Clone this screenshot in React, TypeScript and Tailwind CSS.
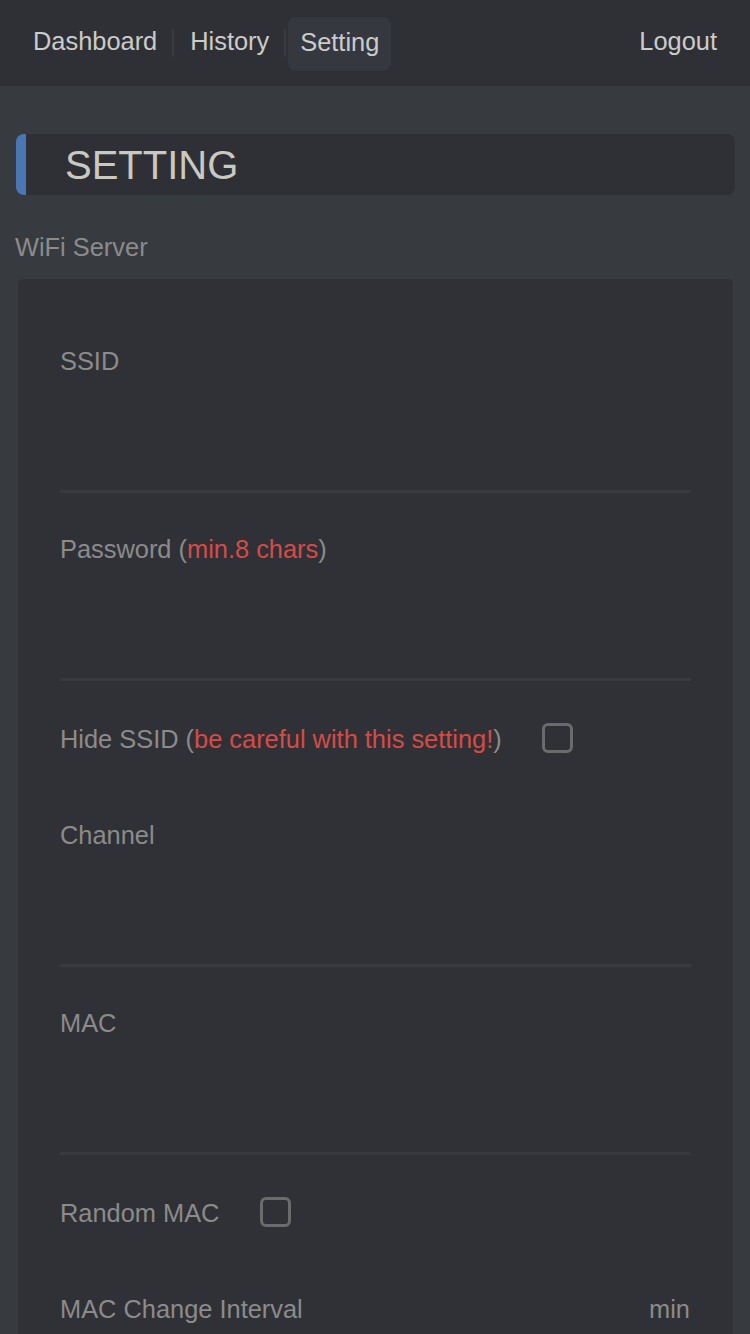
const font = { fontFamily: '"Liberation Sans", Arial, sans-serif' }

function TextField({ label }: { label: React.ReactNode }) {
  return (
    <div className="border-b-[3px] border-[#393a40]">
      <div className="text-[25.4px] leading-[36px] text-[#8b8b8b]">{label}</div>
      <div className="h-[111px]" />
    </div>
  )
}

function CheckRow({ label, boxLeft }: { label: React.ReactNode; boxLeft: string }) {
  return (
    <div className="flex items-center h-[36px]">
      <span className="text-[25.4px] leading-[36px] text-[#8b8b8b] whitespace-nowrap">{label}</span>
      <span className={`${boxLeft} w-[31px] h-[30px] -mt-[3px] rounded-[6px] border-[3px] border-[#6b6b6b]`} />
    </div>
  )
}

export default function App() {
  return (
    <div className="min-h-[1334px] bg-[#373a3f]" style={font}>
      {/* Nav */}
      <nav className="h-[86px] bg-[#2f3035] flex items-center pl-[20px] pr-[20px]">
        <a className="px-[13px] h-[54px] pb-[3px] flex items-center text-[25.4px] text-[#cbcbcb]">Dashboard</a>
        <span className="w-[2px] h-[28px] bg-[#3a3b40] ml-[2px] mr-[3px]" />
        <a className="px-[13px] h-[54px] pb-[3px] flex items-center text-[25.4px] text-[#cbcbcb]">History</a>
        <span className="w-[2px] h-[28px] bg-[#3a3b40] ml-[2px] mr-[2px]" />
        <a className="px-[12px] h-[54px] pb-[3px] flex items-center text-[25.4px] text-[#cbcbcb] bg-[#363840] rounded-[8px] mt-[1px]">Setting</a>
        <a className="ml-auto px-[13px] h-[54px] pb-[3px] flex items-center text-[25.4px] text-[#cbcbcb]">Logout</a>
      </nav>

      <div className="pt-[48px] pl-[16px] pr-[15px]">
        {/* Title */}
        <div className="h-[61px] flex items-center bg-[#2f3035] rounded-[8px] border-l-[10px] border-[#4a77b4] pl-[39px]">
          <h1 className="text-[40px] leading-none text-[#c9c9c2]">SETTING</h1>
        </div>

        <div className="mt-[34px] text-[25.4px] leading-[36px] text-[#8b8b8b] -ml-[1px]">WiFi Server</div>

        {/* Card */}
        <div className="mt-[13px] ml-[1px] mr-[1px] bg-[#303136] border border-[#3a3c41] rounded-[6px] px-[42px] pt-[64px] pb-[40px]">
          <TextField label="SSID" />
          <div className="mt-[38px]">
            <TextField label={<>Password (<span className="text-[#d64b46]">min.8 chars</span>)</>} />
          </div>
          <div className="mt-[40px]">
            <CheckRow
              boxLeft="ml-[40px]"
              label={<>Hide SSID (<span className="text-[#d64b46]">be careful with this setting!</span>)</>}
            />
          </div>
          <div className="mt-[60px]">
            <TextField label="Channel" />
          </div>
          <div className="mt-[38px]">
            <TextField label="MAC" />
          </div>
          <div className="mt-[40px]">
            <CheckRow boxLeft="ml-[41px]" label="Random MAC" />
          </div>
          <div className="mt-[60px] flex justify-between text-[25.4px] leading-[36px] text-[#8b8b8b]">
            <span>MAC Change Interval</span>
            <span className="mr-[1px]">min</span>
          </div>
          <div className="h-[111px]" />
        </div>
      </div>
    </div>
  )
}
